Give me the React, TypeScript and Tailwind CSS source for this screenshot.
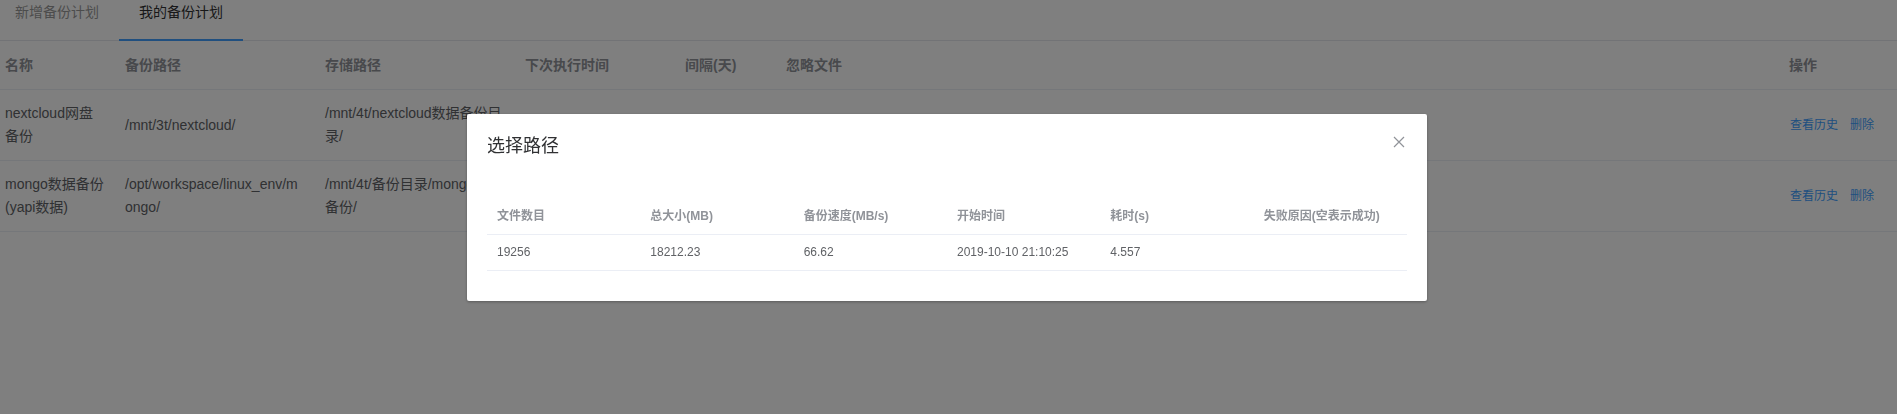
import React from "react";

const font = { fontFamily: '"Liberation Sans", "Noto Sans CJK SC", sans-serif' };

const plans = [
  {
    name: "nextcloud网盘备份",
    src: "/mnt/3t/nextcloud/",
    dest: "/mnt/4t/nextcloud数据备份目录/",
    next: "2019-10-17 21:00:00",
    interval: "7",
    ignore: "",
  },
  {
    name: "mongo数据备份(yapi数据)",
    src: "/opt/workspace/linux_env/mongo/",
    dest: "/mnt/4t/备份目录/mongo数据备份/",
    next: "2019-10-11 21:00:00",
    interval: "1",
    ignore: "",
  },
];

const history = [
  {
    count: "19256",
    size: "18212.23",
    speed: "66.62",
    start: "2019-10-10 21:10:25",
    cost: "4.557",
    reason: "",
  },
];

const Tabs = () => (
  <div className="relative flex h-[41px] border-b border-[#E4E7ED]">
    <div className="px-5 text-[14px] leading-[24px] text-[#999]">新增备份计划</div>
    <div className="px-5 text-[14px] leading-[24px] text-[#303133]">我的备份计划</div>
    <div className="absolute bottom-[-1px] left-[124px] h-[2px] w-[124px] bg-[#409EFF]" />
  </div>
);

const PlanTable = () => {
  const th = "px-[10px] py-[12px] text-left align-middle text-[14px] font-bold leading-[23px] text-[#909399]";
  const td = "px-[10px] py-[12px] align-middle text-[14px] leading-[23px] text-[#606266] break-all";
  return (
    <table className="mt-[1px] w-full table-fixed">
      <colgroup>
        <col className="w-[120px]" />
        <col className="w-[200px]" />
        <col className="w-[200px]" />
        <col className="w-[160px]" />
        <col className="w-[101px]" />
        <col />
        <col className="w-[118px]" />
      </colgroup>
      <thead>
        <tr className="border-b border-[#EBEEF5]">
          <th className={th}>名称</th>
          <th className={th}>备份路径</th>
          <th className={th}>存储路径</th>
          <th className={th}>下次执行时间</th>
          <th className={th}>间隔(天)</th>
          <th className={th}>忽略文件</th>
          <th className={th}>操作</th>
        </tr>
      </thead>
      <tbody>
        {plans.map(p => (
          <tr key={p.name} className="border-b border-[#EBEEF5]">
            <td className={td}>{p.name}</td>
            <td className={td + " pr-[12px]"}>{p.src}</td>
            <td className={td}>{p.dest}</td>
            <td className={td}>{p.next}</td>
            <td className={td}>{p.interval}</td>
            <td className={td}>{p.ignore}</td>
            <td className={td}>
              <div className="flex gap-[12px] pl-[1px] text-[12px] text-[#409EFF]">
                <button type="button" className="cursor-pointer">查看历史</button>
                <button type="button" className="cursor-pointer">删除</button>
              </div>
            </td>
          </tr>
        ))}
      </tbody>
    </table>
  );
};

const HistoryDialog = () => {
  const th = "px-[10px] py-[6px] text-left text-[12px] font-bold leading-[23px] text-[#909399]";
  const td = "px-[10px] py-[6px] text-left text-[12px] leading-[23px] text-[#606266]";
  return (
    <div className="fixed inset-0 z-20 overflow-auto">
      <div className="mt-[114px] ml-[467px] w-[960px] rounded-[2px] bg-white shadow-[0_1px_3px_rgba(0,0,0,0.3)]">
        <div className="relative px-5 pt-5 pb-[10px]">
          <span className="text-[18px] leading-[24px] text-[#303133]">选择路径</span>
          <button
            type="button"
            className="absolute top-5 right-5 flex h-4 w-4 cursor-pointer items-center justify-center">
            <svg width="16" height="16" viewBox="0 0 16 16">
              <path d="M3 3L13 13M13 3L3 13" stroke="#909399" strokeWidth="1.2" fill="none" />
            </svg>
          </button>
        </div>
        <div className="px-5 py-[30px]">
          <table className="w-full table-fixed">
            <thead>
              <tr className="border-b border-[#EBEEF5]">
                <th className={th}>文件数目</th>
                <th className={th}>总大小(MB)</th>
                <th className={th}>备份速度(MB/s)</th>
                <th className={th}>开始时间</th>
                <th className={th}>耗时(s)</th>
                <th className={th}>失败原因(空表示成功)</th>
              </tr>
            </thead>
            <tbody>
              {history.map(h => (
                <tr key={h.start} className="border-b border-[#EBEEF5]">
                  <td className={td}>{h.count}</td>
                  <td className={td}>{h.size}</td>
                  <td className={td}>{h.speed}</td>
                  <td className={td}>{h.start}</td>
                  <td className={td}>{h.cost}</td>
                  <td className={td}>{h.reason}</td>
                </tr>
              ))}
            </tbody>
          </table>
        </div>
      </div>
    </div>
  );
}

export default function App() {
  return (
    <div className="relative h-[414px] w-full overflow-hidden bg-white" style={font}>
      <div className="-ml-[5px]">
        <Tabs />
        <PlanTable />
      </div>
      <div className="fixed inset-0 z-10 bg-black/50" />
      <HistoryDialog />
    </div>
  );
}
